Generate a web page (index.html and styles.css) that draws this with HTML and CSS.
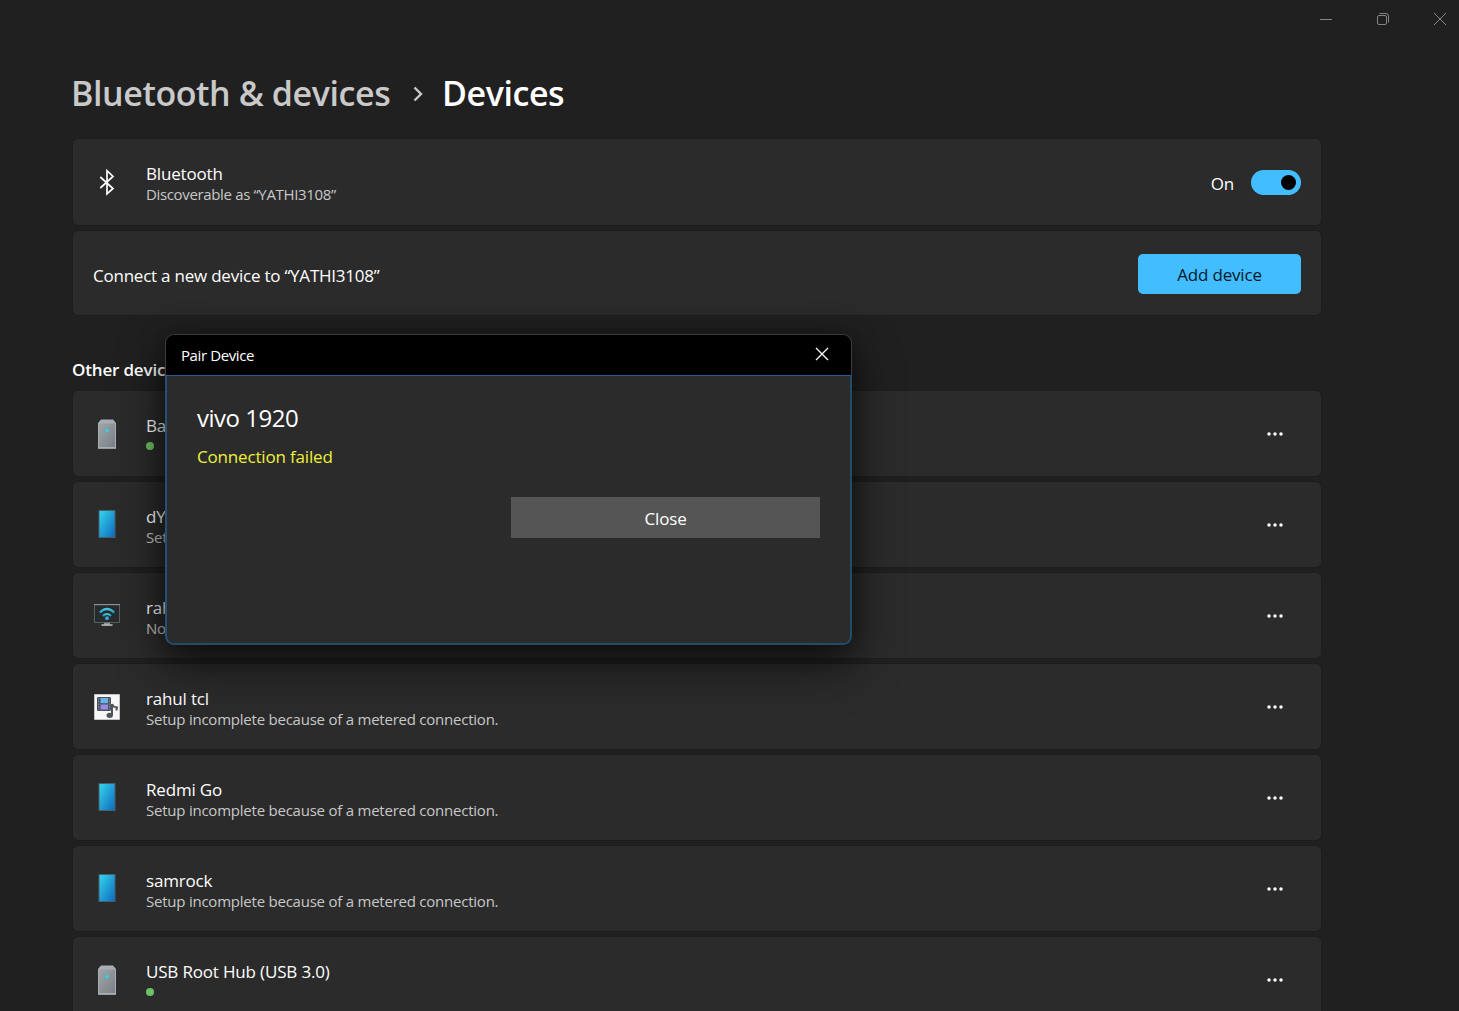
FILE: index.html
```html
<!DOCTYPE html>
<html lang="en">
<head>
<meta charset="utf-8">
<title>Bluetooth &amp; devices</title>
<link rel="stylesheet" href="styles.css">
</head>
<body>
<svg class="defs" width="0" height="0" aria-hidden="true">
  <defs>
    <linearGradient id="phone-fill" x1="0" y1="0" x2="1" y2="1"><stop offset="0" stop-color="#35d4ea"/><stop offset="0.5" stop-color="#219fd6"/><stop offset="1" stop-color="#0d6cbd"/></linearGradient>
    <linearGradient id="tower-fill" x1="0" y1="0" x2="1" y2="1"><stop offset="0" stop-color="#a0a5ac"/><stop offset="1" stop-color="#7b8086"/></linearGradient>
    <linearGradient id="wifi-fill" x1="0" y1="0" x2="0" y2="1"><stop offset="0" stop-color="#48c4dc"/><stop offset="1" stop-color="#2396c4"/></linearGradient>
    <symbol id="tower" viewBox="0 0 30 32">
      <path d="M6 5 9 1.500h12L24 5v25.500H6z" fill="#a9aeb4"/>
      <path d="M7 5.500h16v23.500H7z" fill="url(#tower-fill)"/>
      <path d="M6 29.300h18v1.400H6z" fill="#aab0b5"/>
      <circle cx="15" cy="12.500" r="2.600" fill="#6fa4b2"/><circle cx="15" cy="12.500" r="1.400" fill="#35d3e6"/>
    </symbol>
    <symbol id="phone" viewBox="0 0 30 32">
      <path d="M6.500 1h17v28h-17z" fill="#47616b"/>
      <path d="M7.500 2h15v26h-15z" fill="url(#phone-fill)"/>
    </symbol>
    <symbol id="display" viewBox="0 0 30 32">
      <path d="M2.500 4.500h25v18h-25z" fill="#262c2e" stroke="#596062"/>
      <path d="M2 4h26v1.200H2z" fill="#8b9193"/>
      <path d="M12 22.800h6v2h-6z" fill="#8e9395"/><path d="M9.500 24.300h11v1.500h-11z" fill="#c0c3c4"/>
      <g fill="none" stroke="url(#wifi-fill)" stroke-width="2.200"><path d="M7.800 12.600q7.200-7.200 14.400 0"/><path d="M11 16q4-4 8 0"/></g>
      <circle cx="15" cy="18.200" r="1.900" fill="#32a9cf"/>
    </symbol>
    <symbol id="media" viewBox="0 0 30 32">
      <path d="M2.500 3.500h25v25h-25z" fill="#f7f7f7" stroke="#c4c4c4"/>
      <rect x="5" y="6" width="14" height="14" rx="1" fill="#4b5360"/>
      <path d="M8.500 7h7.500v5.200H8.500z" fill="#66b5ea"/><path d="M8.500 13.500h7.500v5H8.500z" fill="#9a8de0"/>
      <path d="M6.700 7v12M17.700 7v12" stroke="#8d949f" stroke-width="1" stroke-dasharray="1.4 1.4"/>
      <path d="M20 13v11M20 13q1 3.300 5 3.500l-.6 3" fill="none" stroke="#50555c" stroke-width="2"/>
      <ellipse cx="17.700" cy="24.300" rx="3.200" ry="2.600" fill="#50555c"/>
    </symbol>
    <symbol id="dots" viewBox="0 0 18 6"><g fill="#fff"><circle cx="3" cy="3" r="1.750"/><circle cx="9" cy="3" r="1.750"/><circle cx="15" cy="3" r="1.750"/></g></symbol>
  </defs>
</svg>

<div class="titlebar">
  <svg width="14" height="14" viewBox="0 0 14 14"><path d="M1 7.500h12"/></svg>
  <svg width="14" height="14" viewBox="0 0 14 14"><rect x="1.500" y="3.500" width="9" height="9" rx="1.500"/><path d="M3.500 1.500h6.500a2.500 2.500 0 0 1 2.500 2.500v6.500"/></svg>
  <svg width="14" height="14" viewBox="0 0 14 14"><path d="M1 1l12 12M13 1 1 13"/></svg>
</div>

<main class="page">
  <h1 class="crumbs">
    <span class="crumb-parent">Bluetooth &amp; devices</span>
    <svg class="crumb-arrow" width="12" height="18" viewBox="0 0 12 18"><path d="M2.500 2.500 9 9l-6.500 6.500"/></svg>
    <span class="crumb-current">Devices</span>
  </h1>

  <section class="card card-bluetooth">
    <svg class="bt-icon" width="30" height="32" viewBox="0 0 30 32"><path d="M8.300 11 21 22.500 15 27.800V4.700L21 10.500 8.300 22"/></svg>
    <div class="info"><div class="name">Bluetooth</div><div class="sub sub-quoted">Discoverable as “YATHI3108”</div></div>
    <span class="state">On</span>
    <span class="toggle"><span class="knob"></span></span>
  </section>

  <section class="card card-connect">
    <span class="connect-text">Connect a new device to “YATHI3108”</span>
    <button class="add">Add device</button>
  </section>

  <h2 class="group">Other devices</h2>
  <div class="list">
    <section class="card device"><svg class="icon"><use href="#tower"/></svg><div class="info"><div class="name">Basic</div><div class="sub"><i class="online"></i></div></div><svg class="more"><use href="#dots"/></svg></section>
    <section class="card device"><svg class="icon"><use href="#phone"/></svg><div class="info"><div class="name">dY</div><div class="sub">Set</div></div><svg class="more"><use href="#dots"/></svg></section>
    <section class="card device"><svg class="icon"><use href="#display"/></svg><div class="info"><div class="name">rah</div><div class="sub">Not</div></div><svg class="more"><use href="#dots"/></svg></section>
    <section class="card device"><svg class="icon"><use href="#media"/></svg><div class="info"><div class="name">rahul tcl</div><div class="sub">Setup incomplete because of a metered connection.</div></div><svg class="more"><use href="#dots"/></svg></section>
    <section class="card device"><svg class="icon"><use href="#phone"/></svg><div class="info"><div class="name">Redmi Go</div><div class="sub">Setup incomplete because of a metered connection.</div></div><svg class="more"><use href="#dots"/></svg></section>
    <section class="card device"><svg class="icon"><use href="#phone"/></svg><div class="info"><div class="name">samrock</div><div class="sub">Setup incomplete because of a metered connection.</div></div><svg class="more"><use href="#dots"/></svg></section>
    <section class="card device"><svg class="icon"><use href="#tower"/></svg><div class="info"><div class="name">USB Root Hub (USB 3.0)</div><div class="sub"><i class="online"></i></div></div><svg class="more"><use href="#dots"/></svg></section>
  </div>
</main>

<div class="dialog" role="dialog">
  <div class="dialog-title">
    <span>Pair Device</span>
    <svg width="14" height="14" viewBox="0 0 14 14"><path d="M1 1l12 12M13 1 1 13"/></svg>
  </div>
  <div class="dialog-body">
    <div class="dialog-name">vivo 1920</div>
    <div class="dialog-status">Connection failed</div>
    <button class="close">Close</button>
  </div>
</div>
</body>
</html>
```
FILE: styles.css
```css
* { box-sizing: border-box; }
html { height: 100%; overflow: hidden; }
body {
  margin: 0;
  height: 100%;
  overflow: hidden;
  background: #202020;
  color: #fff;
  font: 17px/22px "Open Sans", "Noto Sans", sans-serif;
  letter-spacing: -0.17px;
}
.defs { position: absolute; }
button { border: 0; padding: 0; font: inherit; letter-spacing: inherit; color: inherit; }

.titlebar {
  display: flex;
  justify-content: flex-end;
  gap: 43px;
  height: 38px;
  padding: 12px 12px 0 0;
}
.titlebar svg { fill: none; stroke: #858585; }

.page { width: 1248px; margin-left: 73px; }
.crumbs {
  display: flex;
  align-items: center;
  height: 48px;
  margin: 31px 0 22px -2px;
  font-size: 34px;
  line-height: 48px;
  font-weight: 600;
  letter-spacing: -0.42px;
}
.crumb-parent { width: 340px; color: #c9c9c9; white-space: nowrap; }
.crumb-arrow { margin: 1px 18px 0 1px; fill: none; stroke: #c9c9c9; stroke-width: 2.4; }

.card {
  display: flex;
  align-items: center;
  background: #2b2b2b;
  border-radius: 5px;
  box-shadow: 0 0 0 1px #1d1d1d;
}
.card-bluetooth { height: 86px; padding: 0 20px 0 19px; }
.bt-icon { fill: none; stroke: #fff; stroke-width: 1.7; }
.info { flex: 1; margin-left: 24px; padding-top: 3px; white-space: nowrap; }
.name { height: 21px; line-height: 21px; }
.sub { height: 21px; font-size: 15px; line-height: 21px; color: #c8c8c8; letter-spacing: -0.23px; }
.sub-quoted { letter-spacing: -0.35px; }
.state { margin-right: 17px; padding-top: 3px; }
.toggle {
  display: flex;
  align-items: center;
  justify-content: flex-end;
  width: 50px;
  height: 25px;
  padding-right: 5px;
  border-radius: 13px;
  background: #42bdff;
}
.knob { width: 15px; height: 15px; border-radius: 50%; background: #000; }

.card-connect { height: 84px; margin-top: 6px; padding: 2px 20px 0; justify-content: space-between; }
.connect-text { padding-top: 4px; letter-spacing: -0.23px; }
.add { width: 163px; height: 40px; padding-top: 2px; border-radius: 5px; background: #42bdff; color: #06182a; }

.group { margin: 43px 0 10px -1px; font-size: 17px; line-height: 23px; font-weight: 600; }
.list { display: flex; flex-direction: column; gap: 6px; }
.device { height: 85px; padding: 0 37px 0 19px; }
.device .info { padding-top: 5px; }
.icon { width: 30px; height: 32px; }
.more { width: 18px; height: 6px; }
.online { display: block; width: 8px; height: 8px; margin-top: 6px; border-radius: 50%; background: #6cc164; }
.device .sub { display: flow-root; }

.dialog {
  position: absolute;
  left: 165px;
  top: 334px;
  display: flex;
  flex-direction: column;
  width: 687px;
  height: 311px;
  border-radius: 9px;
  background: #2b2b2b;
  box-shadow: 0 20px 46px rgba(0, 0, 0, 0.6), 0 2px 26px rgba(0, 0, 0, 0.35);
}
.dialog-title {
  display: flex;
  justify-content: space-between;
  height: 41px;
  padding: 9px 22px 0 15px;
  border: 1px solid #3c3c3c;
  border-bottom: 0;
  border-radius: 9px 9px 0 0;
  background: #000;
  font-size: 15px;
  letter-spacing: -0.4px;
}
.dialog-title svg { margin-top: 3px; fill: none; stroke: #fff; stroke-width: 1.3; }
.dialog-body {
  flex: 1;
  padding: 26px 30px 0 30px;
  border: solid;
  border-width: 1px 2px 2px;
  border-color: #265d8c #234b6a #234b6a #225078;
  border-radius: 0 0 9px 9px;
}
.dialog-name { font-size: 24px; line-height: 32px; letter-spacing: -0.5px; }
.dialog-status { margin-top: 11px; line-height: 24px; color: #f0f03a; }
.close { display: block; width: 309px; height: 41px; margin: 28px 0 0 auto; padding-top: 2px; background: #555; }
```
